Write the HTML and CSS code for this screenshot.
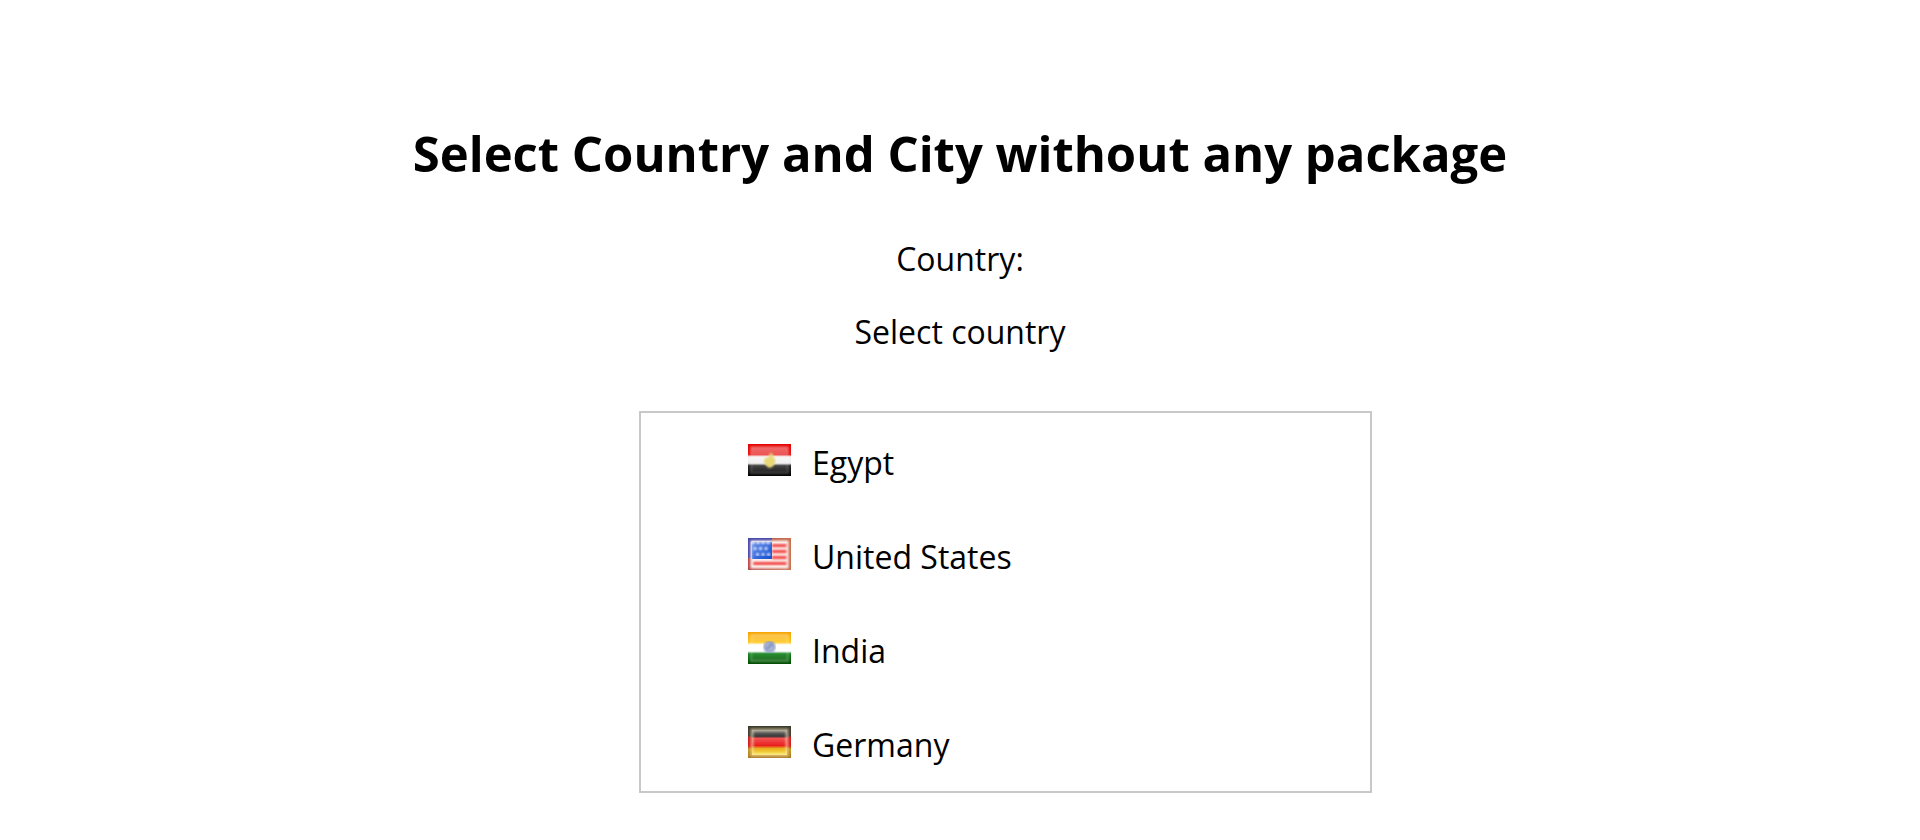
FILE: index.html
```html
<!DOCTYPE html>
<html lang="en">
<head>
<meta charset="utf-8">
<meta name="viewport" content="width=device-width, initial-scale=1">
<title>Select Country and City</title>
<link rel="stylesheet" href="styles.css">
</head>
<body>
<svg class="defs" width="0" height="0" aria-hidden="true">
  <defs>
    <linearGradient id="egypt" x2="0" y2="1">
      <stop offset="0" stop-color="#e40000"/><stop offset=".33" stop-color="#e61414"/>
      <stop offset=".4" stop-color="#f4f4f4"/><stop offset=".6" stop-color="#eee"/>
      <stop offset=".68" stop-color="#222"/><stop offset="1" stop-color="#000"/>
    </linearGradient>
    <linearGradient id="india" x2="0" y2="1">
      <stop offset="0" stop-color="#f6a200"/><stop offset=".32" stop-color="#ffc414"/>
      <stop offset=".4" stop-color="#fff"/><stop offset=".6" stop-color="#fff"/>
      <stop offset=".68" stop-color="#108018"/><stop offset="1" stop-color="#004a00"/>
    </linearGradient>
    <linearGradient id="germany" x2="0" y2="1">
      <stop offset="0" stop-color="#3c3c2c"/><stop offset=".3" stop-color="#443830"/>
      <stop offset=".37" stop-color="#cc1c20"/><stop offset=".62" stop-color="#d81818"/>
      <stop offset=".73" stop-color="#c49818"/><stop offset="1" stop-color="#a87820"/>
    </linearGradient>
    <linearGradient id="germany-field" x2="0" y2="1">
      <stop offset="0" stop-color="#777"/><stop offset=".25" stop-color="#383838"/>
      <stop offset=".34" stop-color="#f45050"/><stop offset=".62" stop-color="#e82020"/>
      <stop offset=".74" stop-color="#e8b020"/><stop offset="1" stop-color="#fae448"/>
    </linearGradient>
    <linearGradient id="shine" x2="0" y2="1">
      <stop offset="0" stop-color="#fff" stop-opacity=".4"/><stop offset=".4" stop-color="#fff" stop-opacity=".22"/>
      <stop offset="1" stop-color="#fff" stop-opacity=".08"/>
    </linearGradient>
    <linearGradient id="warm-shine" x2="0" y2="1">
      <stop offset="0" stop-color="#fff" stop-opacity=".25"/><stop offset=".4" stop-color="#fff" stop-opacity=".1"/>
      <stop offset="1" stop-color="#fff" stop-opacity=".1"/>
    </linearGradient>
    <linearGradient id="canton" x2="1" y2="1">
      <stop offset="0" stop-color="#6088e8"/><stop offset="1" stop-color="#1450d0"/>
    </linearGradient>
    <linearGradient id="us-edge">
      <stop offset="0" stop-color="#b84848"/><stop offset="1" stop-color="#c87050"/>
    </linearGradient>
    <filter id="soft"><feGaussianBlur stdDeviation=".8"/></filter>
  </defs>
</svg>

<main class="page">
  <h1 class="title">Select Country and City without any package</h1>
  <p class="label" id="country-label">Country:</p>
  <button class="toggle" type="button" aria-haspopup="true" aria-expanded="true" aria-describedby="country-label">Select country</button>
  <ul class="menu" aria-labelledby="country-label">
    <li>
      <button class="option" type="button">
        <svg class="flag" viewBox="0 0 43 32" aria-hidden="true">
          <path fill="url(#egypt)" d="M0 0h43v32H0z"/>
          <path fill="url(#shine)" d="M3 3h37v26H3z" filter="url(#soft)"/>
          <path fill="none" stroke="#fff" stroke-opacity=".18" stroke-width="2" d="M3 3h37v26H3z" filter="url(#soft)"/>
          <path fill="#e8d878" d="M21 12l1-3 3 1v3l2 3-1 4-2 3-3 1-3-3-2-3 1-4 3 1z" filter="url(#soft)"/>
          <path fill="#e8d878" d="M18 14h7l2 4-3 4h-4l-3-4z" filter="url(#soft)"/>
        </svg>
        <span>Egypt</span>
      </button>
    </li>
    <li>
      <button class="option" type="button">
        <svg class="flag" viewBox="0 0 43 32" aria-hidden="true">
          <path fill="url(#us-edge)" d="M0 0h43v32H0z"/>
          <path fill="#4848a8" d="M0 0h24v20H0z"/>
          <path fill="#fff0ec" d="M3 3h37v27H3z" filter="url(#soft)"/>
          <path stroke="#f04040" stroke-width="3" d="M24 7.500h15M24 13.500h15M24 19.500h15M5 25.500h34" filter="url(#soft)"/>
          <path fill="url(#canton)" d="M4 4h20v17H4z"/>
          <path stroke="#fff" stroke-width="3" stroke-linecap="round" d="M5 4.500h.1M10 4.500h.1M15 4.500h.1M20 4.500h.1M7 10.500h.1M12.500 10.500h.1M18 10.500h.1M9.500 16.500h.1M15 16.500h.1M20.500 16.500h.1" filter="url(#soft)"/>
          <path stroke="#fff" stroke-opacity=".5" stroke-width="2" fill="none" d="M3.500 3.500h36v26h-36z" filter="url(#soft)"/>
          <path stroke="#ffd070" stroke-width="2" d="M35 10.500h3" filter="url(#soft)"/>
        </svg>
        <span>United States</span>
      </button>
    </li>
    <li>
      <button class="option" type="button">
        <svg class="flag" viewBox="0 0 43 32" aria-hidden="true">
          <path fill="url(#india)" d="M0 0h43v32H0z"/>
          <path fill="url(#warm-shine)" d="M3 3h37v26H3z" filter="url(#soft)"/>
          <path fill="none" stroke="#fff" stroke-opacity=".25" stroke-width="2" d="M3 3h37v26H3z" filter="url(#soft)"/>
          <g filter="url(#soft)">
            <circle cx="21.500" cy="15" r="5" fill="#b4bcd8" stroke="#8094c8" stroke-width="2"/>
            <path stroke="#7080b8" stroke-width="2" d="M19 17l5-5"/>
          </g>
        </svg>
        <span>India</span>
      </button>
    </li>
    <li>
      <button class="option" type="button">
        <svg class="flag" viewBox="0 0 43 32" aria-hidden="true">
          <path fill="url(#germany)" d="M0 0h43v32H0z"/>
          <path fill="url(#germany-field)" d="M4 4h35v25H4z"/>
          <path fill="none" stroke="#fff0c8" stroke-opacity=".55" stroke-width="3" d="M4 4h35v25H4z" filter="url(#soft)"/>
        </svg>
        <span>Germany</span>
      </button>
    </li>
  </ul>
</main>
</body>
</html>
```
FILE: styles.css
```css
* {
  box-sizing: border-box;
}

body {
  margin: 0;
  background: #fff;
  color: #000;
  font-family: "Segoe UI", "Open Sans", "Noto Sans", sans-serif;
  font-size: 32px;
  line-height: 48px;
}

.defs {
  display: block;
}

.page {
  display: flex;
  flex-direction: column;
  align-items: center;
  padding: 119px 16px 48px;
}

.title {
  margin: 0;
  font-size: 49px;
  line-height: 68px;
  font-weight: 700;
  text-align: center;
}

.label {
  margin: 48px 0 25px;
}

.toggle {
  padding: 0;
  border: 0;
  background: none;
  color: inherit;
  font: inherit;
  cursor: pointer;
}

.menu {
  align-self: flex-start;
  width: 38.8%;
  min-width: 400px;
  margin: 55px 0 0 33%;
  padding: 2px 0 0;
  border: 2px solid #c8c8c8;
  list-style: none;
}

.option {
  display: flex;
  align-items: flex-start;
  gap: 21px;
  width: 100%;
  padding: 24px 24px 22px 107px;
  border: 0;
  background: none;
  color: inherit;
  font: inherit;
  text-align: left;
  cursor: pointer;
}

.flag {
  flex: none;
  width: 43px;
  height: 32px;
  margin-top: 5px;
}
```
